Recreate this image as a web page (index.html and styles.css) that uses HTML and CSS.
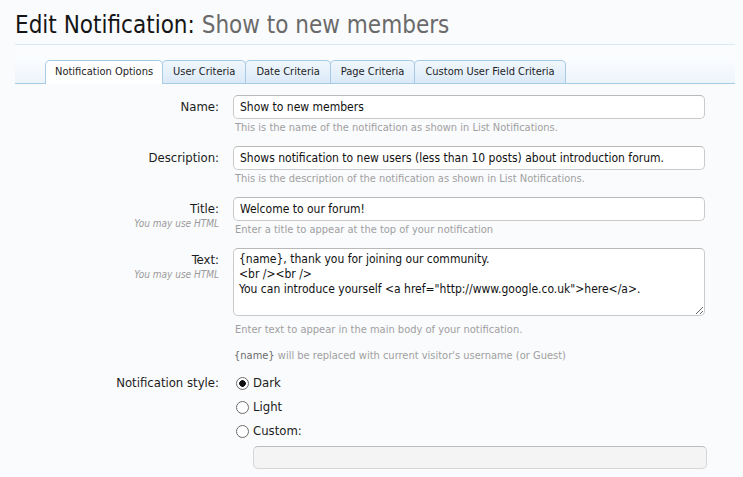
FILE: index.html
```html
<!DOCTYPE html>
<html>
<head>
<meta charset="utf-8">
<title>Edit Notification</title>
<link rel="stylesheet" href="styles.css">
</head>
<body>
<div class="page">
  <h1 class="title">Edit Notification: <span class="sub">Show to new members</span></h1>
  <div class="tabbar">
    <ul class="tabs">
      <li class="tab active">Notification Options</li>
      <li class="tab">User Criteria</li>
      <li class="tab">Date Criteria</li>
      <li class="tab">Page Criteria</li>
      <li class="tab">Custom User Field Criteria</li>
    </ul>
  </div>
  <form class="form">
    <dl class="row">
      <dt class="label">Name:</dt>
      <dd class="field">
        <input class="text" type="text" value="Show to new members">
        <p class="explain">This is the name of the notification as shown in List Notifications.</p>
      </dd>
    </dl>
    <dl class="row">
      <dt class="label">Description:</dt>
      <dd class="field">
        <input class="text" type="text" value="Shows notification to new users (less than 10 posts) about introduction forum.">
        <p class="explain">This is the description of the notification as shown in List Notifications.</p>
      </dd>
    </dl>
    <dl class="row">
      <dt class="label">Title:<span class="hint">You may use HTML</span></dt>
      <dd class="field">
        <input class="text" type="text" value="Welcome to our forum!">
        <p class="explain">Enter a title to appear at the top of your notification</p>
      </dd>
    </dl>
    <dl class="row row-text">
      <dt class="label">Text:<span class="hint">You may use HTML</span></dt>
      <dd class="field">
        <textarea class="area">{name}, thank you for joining our community.
&lt;br /&gt;&lt;br /&gt;
You can introduce yourself &lt;a href="http://www.google.co.uk"&gt;here&lt;/a&gt;.</textarea>
        <p class="explain explain-area">Enter text to appear in the main body of your notification.</p>
        <p class="explain explain-extra"><span class="var">{name}</span> will be replaced with current visitor's username (or Guest)</p>
      </dd>
    </dl>
    <dl class="row row-radio">
      <dt class="label">Notification style:</dt>
      <dd class="field">
        <ul class="radios">
          <li class="radio-item"><label><input class="radio" type="radio" name="style" checked> Dark</label></li>
          <li class="radio-item"><label><input class="radio" type="radio" name="style"> Light</label></li>
          <li class="radio-item"><label><input class="radio" type="radio" name="style"> Custom:</label></li>
        </ul>
        <input class="text custom" type="text" disabled>
      </dd>
    </dl>
  </form>
</div>
</body>
</html>
```

FILE: styles.css
```css
html, body {
  margin: 0;
  padding: 0;
  background: #fafbfd;
}

body {
  font-family: "DejaVu Sans Condensed", "Liberation Sans", Arial, sans-serif;
  color: #141414;
  font-size: 13px;
}

.page {
  width: 720px;
  margin-left: 15px;
}

.title {
  margin: 11px 0 0;
  padding-bottom: 5px;
  font-size: 24px;
  line-height: 28px;
  font-weight: normal;
  color: #151515;
  border-bottom: 1px solid #d6ebfa;
}

.sub {
  color: #6a6a6a;
}

.tabbar {
  height: 38px;
  border-bottom: 1px solid #a8cbe5;
  background: linear-gradient(to bottom, #fbfcfe 0%, #fafcfe 40%, #edf4fa 100%);
  display: flex;
  align-items: flex-end;
  padding-left: 30px;
}

.tabs {
  list-style: none;
  margin: 0;
  padding: 0;
  display: flex;
  align-items: flex-end;
}

.tab {
  box-sizing: border-box;
  height: 23px;
  line-height: 22px;
  padding: 0 10px;
  font-size: 11px;
  color: #1d1d1d;
  border: 1px solid #a8cbe5;
  border-bottom: none;
  border-radius: 5px 5px 0 0;
  background: linear-gradient(to bottom, #f0f7fd 0%, #dbeaf8 100%);
  margin-right: -1px;
  white-space: nowrap;
}

.tab.active {
  height: 24px;
  margin-bottom: -1px;
  padding: 0 9px;
  background: #ffffff;
  position: relative;
  z-index: 1;
}

.form {
  padding-top: 11px;
  margin: 0;
}

.row {
  display: grid;
  grid-template-columns: 204px 472px;
  column-gap: 14px;
  margin: 0 0 11px;
}

.row-text {
  margin-bottom: 8px;
}

.label {
  margin: 0;
  text-align: right;
  font-size: 13px;
  line-height: 24px;
  color: #1b1b1b;
}

.hint {
  display: block;
  font-size: 10px;
  font-style: italic;
  color: #9a9a9a;
  line-height: 10px;
  margin-top: -2px;
}

.field {
  margin: 0;
}

.text {
  box-sizing: border-box;
  display: block;
  width: 472px;
  height: 24px;
  margin: 0;
  padding: 0 6px;
  font-family: "DejaVu Sans Condensed", "Liberation Sans", Arial, sans-serif;
  font-size: 12px;
  color: #111;
  background: #ffffff;
  border: 1px solid #cacaca;
  border-top-color: #b9b9b9;
  border-radius: 5px;
  outline: none;
}

.area {
  box-sizing: border-box;
  display: block;
  width: 472px;
  height: 68px;
  margin: 0;
  padding: 3px 5px;
  font-family: "DejaVu Sans Condensed", "Liberation Sans", Arial, sans-serif;
  font-size: 12px;
  line-height: 15px;
  color: #111;
  background: #ffffff;
  border: 1px solid #cacaca;
  border-top-color: #b9b9b9;
  border-radius: 5px;
  resize: vertical;
  overflow: hidden;
}

.explain {
  margin: 2px 0 0 2px;
  font-size: 11px;
  line-height: 14px;
  color: #a0a0a0;
}

.explain-area {
  margin-top: 7px;
}

.explain-extra {
  margin-top: 12px;
  margin-left: 1px;
}

.var {
  color: #6a6a6a;
}

.radios {
  list-style: none;
  margin: 0;
  padding: 0;
}

.radio-item {
  line-height: 24px;
  font-size: 13px;
  color: #1b1b1b;
}

.radio-item label {
  display: flex;
  align-items: center;
}

.radio {
  appearance: none;
  -webkit-appearance: none;
  box-sizing: border-box;
  width: 13px;
  height: 13px;
  margin: 0 4px 0 3px;
  border: 1px solid #6c6c6c;
  border-radius: 50%;
  background: #ffffff;
}

.radio:checked {
  background: radial-gradient(circle, #111 0, #111 3px, #fff 3.6px);
}

.text.custom {
  width: 454px;
  height: 23px;
  margin: 3px 0 0 20px;
  background: #f4f4f4;
  border-color: #d6d6d6;
  border-top-color: #bdbdbd;
}
```
